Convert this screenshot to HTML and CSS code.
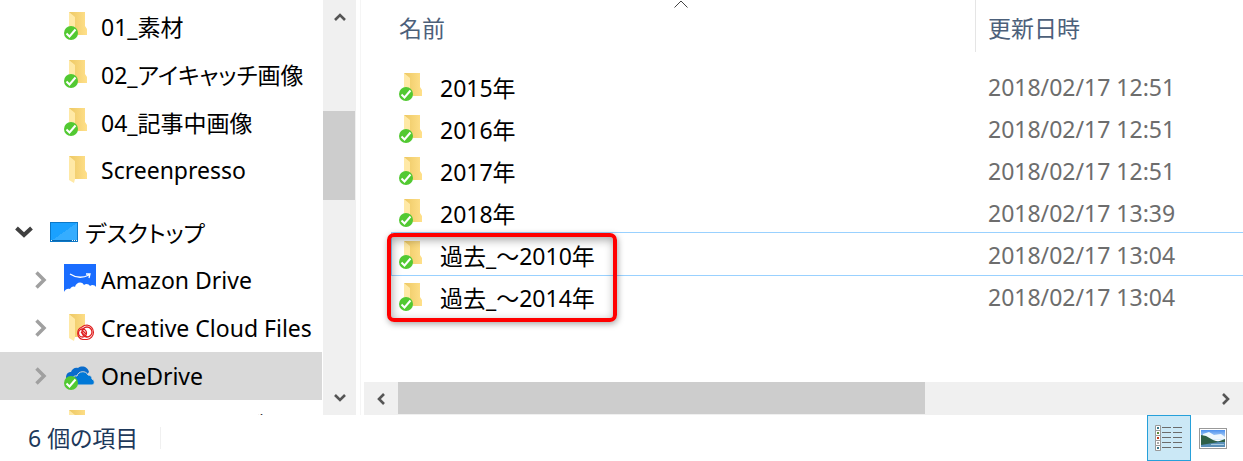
FILE: index.html
```html
<!DOCTYPE html>
<html lang="ja">
<head>
    <meta charset="UTF-8">
    <meta name="viewport" content="width=device-width, initial-scale=1.0">
    <title>OneDrive</title>
    <link rel="stylesheet" href="styles.css">
</head>
<body>
    <!-- Shared icons -->
    <svg class="sprite" aria-hidden="true">
        <defs>
            <linearGradient id="back" x1="0" y1="0" x2="1" y2="0">
                <stop offset="0" stop-color="#edc864"/>
                <stop offset="1" stop-color="#ffe08a"/>
            </linearGradient>
            <linearGradient id="screen" x1="0" y1="0" x2="1" y2="1">
                <stop offset="0.5" stop-color="#1aa1ff"/>
                <stop offset="0.5" stop-color="#35adff"/>
            </linearGradient>
            <linearGradient id="sky" x1="0" y1="0" x2="0" y2="1">
                <stop offset="0" stop-color="#4a90ee"/>
                <stop offset="1" stop-color="#dff0fb"/>
            </linearGradient>
        </defs>
        <symbol id="folder" viewBox="0 0 32 32">
            <path fill="url(#back)" d="M5 2h16v14l2 3v6H8z"/>
            <path fill="#ffe9a6" d="M5 2l6 5v18l-1 4-5-3z"/>
        </symbol>
        <symbol id="check" viewBox="0 0 32 32">
            <circle cx="7" cy="23" r="7" fill="#52c932"/>
            <path fill="none" stroke="#fff" stroke-width="2" d="M2.500 23.500l3 3 6-7"/>
        </symbol>
        <symbol id="open" viewBox="0 0 18 12">
            <path fill="none" stroke="#404040" stroke-width="4" d="M1.500 2L9 9l7.500-7"/>
        </symbol>
        <symbol id="closed" viewBox="0 0 12 18">
            <path fill="none" stroke="#a0a0a0" stroke-width="3.500" d="M1.500 1.500L9 9l-7.500 7.500"/>
        </symbol>
        <symbol id="arrow" viewBox="0 0 14 14">
            <path fill="none" stroke="#555" stroke-width="2.600" d="M2 10l5-5 5 5"/>
        </symbol>
    </svg>

    <div class="content">
        <nav class="sidebar">
            <a class="item" href="#"><svg class="icon"><use href="#folder"/><use href="#check"/></svg>01_素材</a>
            <a class="item" href="#"><svg class="icon"><use href="#folder"/><use href="#check"/></svg>02_アイキャッチ画像</a>
            <a class="item" href="#"><svg class="icon"><use href="#folder"/><use href="#check"/></svg>04_記事中画像</a>
            <a class="item" href="#"><svg class="icon"><use href="#folder"/></svg>Screenpresso</a>
            <a class="item root" href="#">
                <svg class="open"><use href="#open"/></svg>
                <svg class="desktop" viewBox="0 0 28 20">
                    <rect x="0.500" y="0.500" width="27" height="19" fill="url(#screen)" stroke="#0b78c8"/>
                    <path stroke="#0868b0" d="M1 18.500h26"/>
                    <path stroke="#fff" d="M1 18.500h1M22 18.500h1M24 18.500h1M26 18.500h1"/>
                </svg>
                デスクトップ
            </a>
            <a class="item child" href="#">
                <svg class="closed"><use href="#closed"/></svg>
                <svg class="icon" viewBox="0 0 32 32">
                    <path fill="#1a6dff" d="M0 0h32v23c-1-2-4-3-6-1-1-2-4-3-6-1-2-4-8-3-9 2-2-1-4 0-5 2-3-1-5 1-6 3z"/>
                    <path fill="none" stroke="#fff" stroke-width="1.300" d="M6 10c6 4 13 4 19 1M22 10h4l-1 4"/>
                </svg>
                Amazon Drive
            </a>
            <a class="item child" href="#">
                <svg class="closed"><use href="#closed"/></svg>
                <svg class="icon" viewBox="0 0 32 32">
                    <use href="#folder"/>
                    <path fill="#fff" stroke="#e02020" stroke-width="1.200" d="M19 27.500a6.500 6.500 0 0 1-1-12.500c1-1 3-2 5-2a7.300 7.300 0 0 1 0 14.500z"/>
                    <circle cx="18.500" cy="21" r="4" fill="none" stroke="#e02020" stroke-width="1.300"/>
                    <circle cx="23" cy="20" r="5" fill="none" stroke="#e02020" stroke-width="1.300"/>
                    <path fill="none" stroke="#e02020" stroke-width="1.300" d="M17 20l6 5M18 18l4 4"/>
                </svg>
                Creative Cloud Files
            </a>
            <a class="item child selected" href="#">
                <svg class="closed"><use href="#closed"/></svg>
                <svg class="icon" viewBox="0 0 32 32">
                    <path fill="#0a6ccb" d="M2 18c0-4 2-6 5-6 1-3 4-5 7-4 4-3 10-1 11 4l-5 6-8 4z"/>
                    <path fill="#0078d7" stroke="#d9d9d9" d="M10 24c-4-4-1-9 3-8 1-5 9-6 11-1 3 0 4 2 4 4 3 1 3 6 0 6H13z"/>
                    <use href="#check"/>
                </svg>
                OneDrive
            </a>
            <a class="item" href="#"><svg class="icon"><use href="#folder"/></svg>Google ドライブ</a>
        </nav>

        <div class="vscroll">
            <button class="vbutton" aria-label="上へ"><svg class="arrow"><use href="#arrow"/></svg></button>
            <div class="vthumb"></div>
            <button class="vbutton" aria-label="下へ"><svg class="arrow down"><use href="#arrow"/></svg></button>
        </div>

        <main class="files">
            <div class="list">
                <svg class="sort" viewBox="0 0 14 8"><path fill="none" stroke="#444" d="M0.500 7.500L7 1l6.500 6.500"/></svg>
                <table>
                    <thead>
                        <tr><th class="name">名前</th><th class="date">更新日時</th></tr>
                    </thead>
                    <tbody>
                        <tr><td><div class="entry"><svg class="icon"><use href="#folder"/><use href="#check"/></svg>2015年</div></td><td>2018/02/17 12:51</td></tr>
                        <tr><td><div class="entry"><svg class="icon"><use href="#folder"/><use href="#check"/></svg>2016年</div></td><td>2018/02/17 12:51</td></tr>
                        <tr><td><div class="entry"><svg class="icon"><use href="#folder"/><use href="#check"/></svg>2017年</div></td><td>2018/02/17 12:51</td></tr>
                        <tr><td><div class="entry"><svg class="icon"><use href="#folder"/><use href="#check"/></svg>2018年</div></td><td>2018/02/17 13:39</td></tr>
                        <tr class="focused"><td><div class="entry"><svg class="icon"><use href="#folder"/><use href="#check"/></svg>過去_～2010年</div></td><td>2018/02/17 13:04</td></tr>
                        <tr><td><div class="entry"><svg class="icon"><use href="#folder"/><use href="#check"/></svg>過去_～2014年</div></td><td>2018/02/17 13:04</td></tr>
                    </tbody>
                </table>
                <div class="highlight"></div>
            </div>
            <div class="hscroll">
                <button class="hbutton" aria-label="左へ"><svg class="arrow left"><use href="#arrow"/></svg></button>
                <div class="htrack"><div class="hthumb"></div></div>
                <button class="hbutton" aria-label="右へ"><svg class="arrow right"><use href="#arrow"/></svg></button>
            </div>
        </main>
    </div>

    <footer class="status">
        <span class="count">6 個の項目</span>
        <div class="views">
            <button class="view active" aria-label="詳細">
                <svg class="details" viewBox="0 0 28 26">
                    <path fill="#fff" stroke="#999" d="M0.500 0.500h5v5h-5zM0.500 5.500h5v5h-5zM0.500 10.500h5v5h-5zM0.500 15.500h5v5h-5zM0.500 20.500h5v5h-5z"/>
                    <path stroke="#3a7a8c" stroke-width="2" d="M2 3h2M2 23h2"/>
                    <path stroke="#5a8a3c" stroke-width="2" d="M2 8h2"/>
                    <path stroke="#c03a1c" stroke-width="2" d="M2 13h2"/>
                    <path stroke="#aaa" stroke-width="2" d="M2 18h2"/>
                    <path stroke="#6b6b6b" d="M7 2.500h9M18 2.500h9M7 7.500h9M18 7.500h9M7 12.500h9M18 12.500h9M7 17.500h9M18 17.500h9M7 22.500h9M18 22.500h9"/>
                </svg>
            </button>
            <button class="view" aria-label="大アイコン">
                <svg class="picture" viewBox="0 0 28 21">
                    <rect x="0.500" y="0.500" width="27" height="20" fill="#fff" stroke="#999"/>
                    <path fill="url(#sky)" d="M2 2h24v10H2z"/>
                    <path fill="#eef7fd" d="M4 6l6-2 5 3 7-1 4 3v2H4z"/>
                    <path fill="#5a8fb8" d="M2 13h24v6H2z"/>
                    <path fill="#2f6048" d="M2 7l5 1 7 4 6 2-18 3zM26 11l-8 3h8z"/>
                    <path stroke="#a9cbe0" d="M12 16.500h13"/>
                </svg>
            </button>
        </div>
    </footer>
</body>
</html>
```
FILE: styles.css
```css
body {
    margin: 0;
    height: 100vh;
    display: flex;
    flex-direction: column;
    overflow: hidden;
    background-color: #fff;
    color: #000;
    font-family: "Noto Sans", "Noto Sans CJK JP", sans-serif;
    font-size: 23px;
    font-feature-settings: "palt";
}
button {
    padding: 0;
    border: none;
    background: none;
    display: flex;
    align-items: center;
    justify-content: center;
}
.sprite {
    position: absolute;
    width: 0;
    height: 0;
}
.icon {
    width: 32px;
    height: 32px;
    flex: none;
}
.content {
    flex: 1;
    min-height: 0;
    display: flex;
}

/* Navigation pane */
.sidebar {
    width: 322px;
    flex: none;
    padding-top: 2px;
    overflow: hidden;
    box-sizing: border-box;
}
.item {
    display: flex;
    align-items: center;
    gap: 5px;
    height: 48px;
    padding-left: 64px;
    color: #000;
    text-decoration: none;
    white-space: nowrap;
}
.root {
    margin-top: 14px;
    padding-left: 15px;
    gap: 7px;
}
.child {
    padding-left: 35px;
    gap: 5px;
}
.selected {
    background-color: #d9d9d9;
}
.open {
    width: 18px;
    height: 12px;
    margin-right: 10px;
}
.closed {
    width: 12px;
    height: 18px;
    margin-right: 12px;
}
.desktop {
    width: 28px;
    height: 20px;
}

/* Scroll bars */
.vscroll {
    display: flex;
    flex-direction: column;
    width: 33px;
    margin: 0 4px 0 1px;
    flex: none;
    background-color: #f0f0f0;
}
.vbutton {
    height: 34px;
}
.vthumb {
    height: 89px;
    margin: 77px 1px auto 0;
    background-color: #cdcdcd;
}
.arrow {
    width: 14px;
    height: 14px;
}
.down {
    transform: rotate(180deg);
}
.left {
    transform: rotate(-90deg);
}
.right {
    transform: rotate(90deg);
}
.hscroll {
    display: flex;
    height: 33px;
    background-color: #f0f0f0;
}
.hbutton {
    width: 34px;
}
.htrack {
    flex: 1;
}
.hthumb {
    width: 65%;
    height: 32px;
    background-color: #cdcdcd;
}

/* File list */
.files {
    flex: 1;
    min-width: 0;
    display: flex;
    flex-direction: column;
    padding-left: 3px;
    border-left: 1px solid #f5f5f5;
}
.list {
    flex: 1;
    position: relative;
    padding-left: 28px;
}
table {
    width: 100%;
    border-collapse: separate;
    border-spacing: 0;
    table-layout: fixed;
}
th {
    height: 52px;
    box-sizing: border-box;
    padding: 2px 0 0 7px;
    font-weight: normal;
    text-align: left;
    color: #4c607a;
}
.name {
    width: 584px;
    border-right: 1px solid #e5e5e5;
}
.date {
    padding-left: 12px;
}
tbody::before {
    content: "";
    display: block;
    height: 13px;
}
td {
    height: 42px;
    box-sizing: border-box;
    padding: 2px 0 0 12px;
    color: #6d6d6d;
}
td:first-child {
    padding-left: 7px;
    color: #000;
}
.entry {
    display: flex;
    align-items: center;
    gap: 9px;
    height: 40px;
}
.focused {
    outline: 1px solid #99d1ff;
}
.sort {
    position: absolute;
    top: 0;
    left: 310px;
    width: 14px;
    height: 8px;
}
.highlight {
    position: absolute;
    top: 233px;
    left: 23px;
    width: 222px;
    height: 81px;
    border: 4px solid #f00;
    border-radius: 7px;
    box-shadow: 1px 2px 6px rgba(0, 0, 0, 0.35), inset 1px 3px 10px rgba(0, 0, 0, 0.35);
}

/* Status bar */
.status {
    display: flex;
    align-items: center;
    justify-content: space-between;
    height: 46px;
    flex: none;
    padding-left: 28px;
    color: #1e395b;
}
.count {
    padding-right: 22px;
    line-height: 22px;
    border-right: 1px solid #f0f0f0;
}
.views {
    display: flex;
    padding-right: 8px;
}
.view {
    width: 44px;
    height: 46px;
}
.active {
    border: 1px solid #26a0da;
    background-color: #cbe8f6;
}
.details {
    width: 28px;
    height: 26px;
}
.picture {
    width: 28px;
    height: 21px;
}
```
